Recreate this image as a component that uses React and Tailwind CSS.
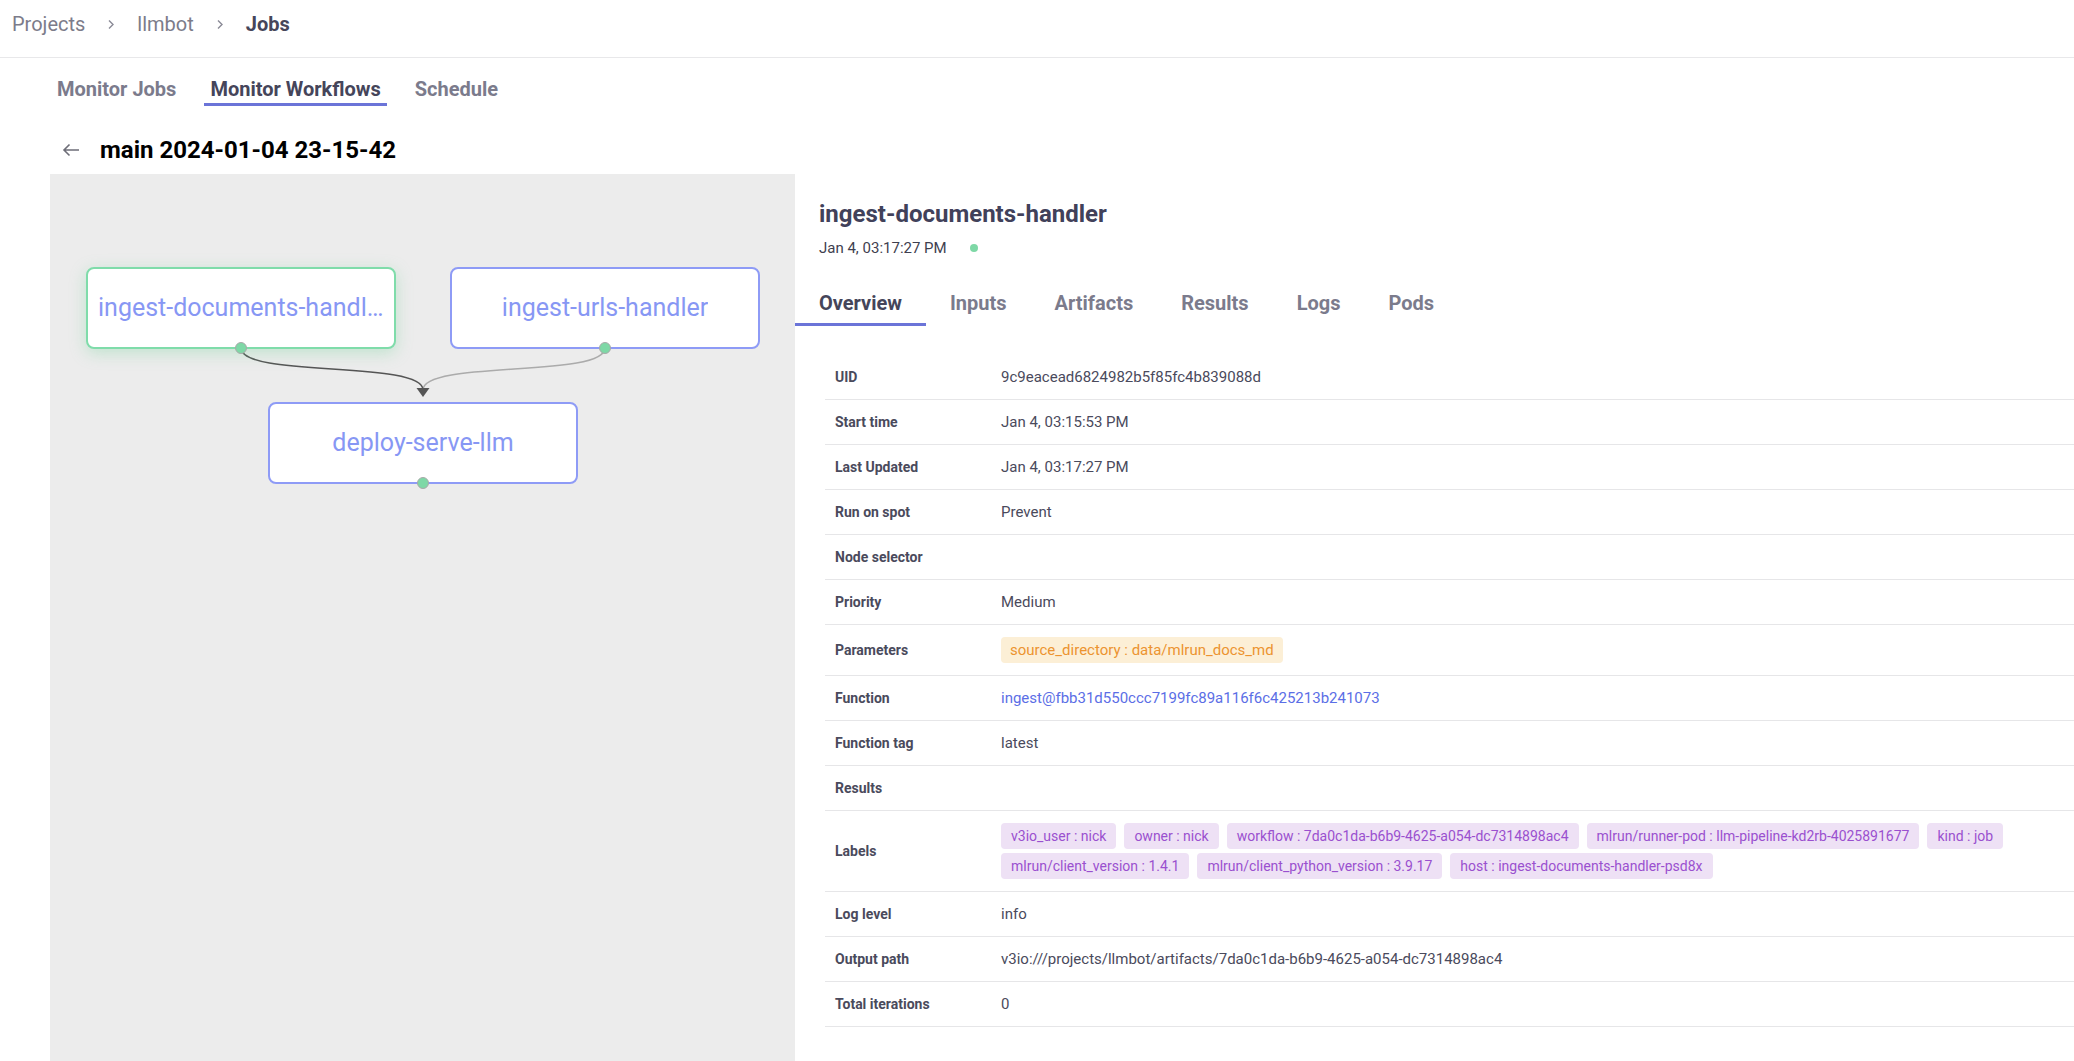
import React from 'react'

const rows = [
  { label: 'UID', value: '9c9eacead6824982b5f85fc4b839088d' },
  { label: 'Start time', value: 'Jan 4, 03:15:53 PM' },
  { label: 'Last Updated', value: 'Jan 4, 03:17:27 PM' },
  { label: 'Run on spot', value: 'Prevent' },
  { label: 'Node selector', value: '' },
  { label: 'Priority', value: 'Medium' },
  { label: 'Parameters', type: 'params' },
  { label: 'Function', type: 'link', value: 'ingest@fbb31d550ccc7199fc89a116f6c425213b241073' },
  { label: 'Function tag', value: 'latest' },
  { label: 'Results', value: '' },
  { label: 'Labels', type: 'labels' },
  { label: 'Log level', value: 'info' },
  { label: 'Output path', value: 'v3io:///projects/llmbot/artifacts/7da0c1da-b6b9-4625-a054-dc7314898ac4' },
  { label: 'Total iterations', value: '0' },
]

const labels = [
  'v3io_user : nick',
  'owner : nick',
  'workflow : 7da0c1da-b6b9-4625-a054-dc7314898ac4',
  'mlrun/runner-pod : llm-pipeline-kd2rb-4025891677',
  'kind : job',
  'mlrun/client_version : 1.4.1',
  'mlrun/client_python_version : 3.9.17',
  'host : ingest-documents-handler-psd8x',
]

function Chevron() {
  return (
    <svg width="8" height="11" viewBox="0 0 8 11" className="mx-[22px]">
      <path d="M2 1.5 L6 5.5 L2 9.5" fill="none" stroke="#8a8a96" strokeWidth="1.4" />
    </svg>
  )
}

function Node({ x, y, label, active }) {
  return (
    <div
      className={
        'absolute w-[310px] h-[82px] rounded-[8px] bg-white border-2 flex items-center justify-center px-[10px] ' +
        (active
          ? 'border-[#7fdcaa] shadow-[0_4px_16px_rgba(110,210,150,0.35)]'
          : 'border-[#8e9bf6]')
      }
      style={{ left: x, top: y }}
    >
      <span className="truncate text-[25px] text-[#8797f4]">{label}</span>
    </div>
  )
}

function Port({ x, y }) {
  return (
    <div
      className="absolute w-[12px] h-[12px] rounded-full bg-[#7ed8a6] border-[1.5px] border-[#a9a9a9] -translate-x-1/2 -translate-y-1/2"
      style={{ left: x, top: y }}
    />
  )
}

export default function App() {
  return (
    <div className="w-full h-[1061px] overflow-hidden bg-white font-['Roboto',sans-serif] flex flex-col">
      {/* breadcrumb */}
      <div className="h-[58px] shrink-0 border-b border-[#e8e8ea] flex items-start pt-[12px] pl-[12px] text-[20px] leading-[24px]">
        <span className="text-[#7c7c8a]">Projects</span>
        <span className="h-[24px] flex items-center"><Chevron /></span>
        <span className="text-[#7c7c8a]">llmbot</span>
        <span className="h-[24px] flex items-center"><Chevron /></span>
        <span className="font-bold text-[#46465a]">Jobs</span>
      </div>

      {/* page tabs */}
      <div className="flex pl-[51px] gap-[22px] shrink-0">
        <div className="px-[6px] pt-[19px] pb-[2px] border-b-[3px] border-transparent text-[20px] leading-[24px] font-bold text-[#7b7b8c]">Monitor Jobs</div>
        <div className="px-[6px] pt-[19px] pb-[2px] border-b-[3px] border-[#6b74d8] text-[20px] leading-[24px] font-bold text-[#45455a]">Monitor Workflows</div>
        <div className="px-[6px] pt-[19px] pb-[2px] border-b-[3px] border-transparent text-[20px] leading-[24px] font-bold text-[#7b7b8c]">Schedule</div>
      </div>

      {/* title */}
      <div className="flex items-center pl-[62px] pt-[30px] pb-[10px] shrink-0">
        <svg width="18" height="14" viewBox="0 0 18 14" className="mr-[20px]">
          <path d="M17 7 H2 M7.5 1.5 L2 7 L7.5 12.5" fill="none" stroke="#6e6e78" strokeWidth="1.6" />
        </svg>
        <h1 className="text-[24px] leading-[28px] font-bold text-black">main 2024-01-04 23-15-42</h1>
      </div>

      <div className="flex flex-1 min-h-0">
        {/* canvas */}
        <div className="ml-[50px] w-[745px] shrink-0 bg-[#ececec] relative">
          <svg className="absolute inset-0" width="745" height="887">
            <path d="M555 174 C555 204 373 186 373 216" fill="none" stroke="#ababab" strokeWidth="1.6" />
            <path d="M191 174 C191 204 373 186 373 216" fill="none" stroke="#555555" strokeWidth="1.6" />
            <path d="M366.5 214 L379.5 214 L373 223 Z" fill="#555555" />
          </svg>
          <Node x={36} y={93} label="ingest-documents-handler" active />
          <Node x={400} y={93} label="ingest-urls-handler" />
          <Node x={218} y={228} label="deploy-serve-llm" />
          <Port x={191} y={174} />
          <Port x={555} y={174} />
          <Port x={373} y={309} />
        </div>

        {/* details */}
        <div className="flex-1 min-w-0">
          <div className="pl-[24px] pt-[26px]">
            <h2 className="text-[24px] leading-[28px] font-bold text-[#41415a]">ingest-documents-handler</h2>
            <div className="flex items-center mt-[10px] text-[15px] leading-[20px] text-[#3f3f50]">
              <span>Jan 4, 03:17:27 PM</span>
              <span className="ml-[23px] w-[8px] h-[8px] rounded-full bg-[#7ed8a6]" />
            </div>
          </div>

          <div className="flex mt-[33px]">
            {['Overview', 'Inputs', 'Artifacts', 'Results', 'Logs', 'Pods'].map((t, i) => (
              <div
                key={t}
                className={
                  'px-6 pb-[8px] border-b-[3px] text-[20px] leading-[24px] font-bold ' +
                  (i === 0 ? 'border-[#6b74d8] text-[#45455a]' : 'border-transparent text-[#7b7b8c]')
                }
              >
                {t}
              </div>
            ))}
          </div>

          <div className="ml-[30px] mt-[29px]">
            {rows.map((r) => (
              <div key={r.label} className="flex border-b border-[#e6e6e8] py-3">
                <div className="w-[176px] shrink-0 pl-[10px] flex items-center text-[14px] leading-[20px] font-bold text-[#4a4a5c]">{r.label}</div>
                <div className="flex-1 min-h-[20px] flex items-center text-[15px] leading-[20px] text-[#4a4a5c]">
                  {r.type === 'params' ? (
                    <span className="px-[9px] h-[26px] flex items-center rounded-[4px] bg-[#fcefd6] text-[#ec9430]">source_directory : data/mlrun_docs_md</span>
                  ) : r.type === 'labels' ? (
                    <div className="flex flex-wrap gap-x-[8px] gap-y-[4px] text-[14px]">
                      {labels.map((l) => (
                        <span key={l} className="px-[10px] h-[26px] flex items-center rounded-[4px] bg-[#eee1f5] text-[#9a50cf]">{l}</span>
                      ))}
                    </div>
                  ) : r.type === 'link' ? (
                    <span className="text-[#5b6ee6]">{r.value}</span>
                  ) : (
                    <span>{r.value}</span>
                  )}
                </div>
              </div>
            ))}
          </div>
        </div>
      </div>
    </div>
  )
}
